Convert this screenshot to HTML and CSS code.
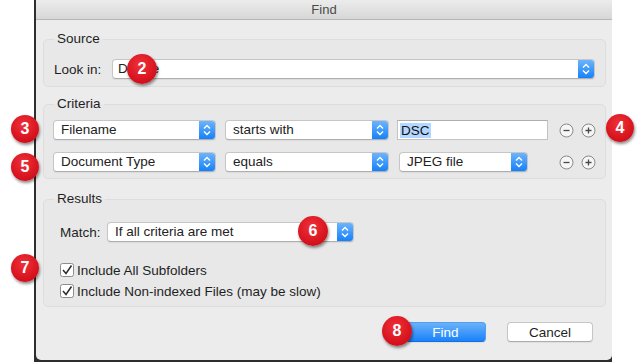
FILE: index.html
```html
<!DOCTYPE html>
<html lang="en">
  <head>
    <meta charset="UTF-8" />
    <meta name="viewport" content="width=device-width, initial-scale=1.0" />
    <title>Find</title>
    <link rel="stylesheet" href="styles.css">
  </head>
  <body>
    <div class="desk">
      <div class="frame">
        <div class="window">
          <div class="titlebar">Find</div>
          <div class="content">
            <fieldset class="group source">
              <legend>Source</legend>
              <div class="row">
                <span class="label">Look in:</span>
                <div class="popup look">
                  <span class="value">Device</span>
                  <span class="stepper"><svg width="16" height="18" viewBox="0 0 16 18"><path d="M5 7.5 8 4.5 11 7.5M5 10.5 8 13.5 11 10.5" /></svg></span>
                </div>
              </div>
            </fieldset>

            <fieldset class="group criteria">
              <legend>Criteria</legend>
              <div class="row">
                <div class="popup field">
                  <span class="value">Filename</span>
                  <span class="stepper"><svg width="16" height="18" viewBox="0 0 16 18"><path d="M5 7.5 8 4.5 11 7.5M5 10.5 8 13.5 11 10.5" /></svg></span>
                </div>
                <div class="popup op">
                  <span class="value">starts with</span>
                  <span class="stepper"><svg width="16" height="18" viewBox="0 0 16 18"><path d="M5 7.5 8 4.5 11 7.5M5 10.5 8 13.5 11 10.5" /></svg></span>
                </div>
                <div class="textfield"><span class="selected">DSC</span></div>
                <div class="pm">
                  <svg width="15" height="15" viewBox="0 0 15 15"><circle cx="7.5" cy="7.5" r="6.5" /><path d="M4.5 7.5H10.5" /></svg>
                  <svg width="15" height="15" viewBox="0 0 15 15"><circle cx="7.5" cy="7.5" r="6.5" /><path d="M4.5 7.5H10.5M7.5 4.5V10.5" /></svg>
                </div>
              </div>
              <div class="row">
                <div class="popup field">
                  <span class="value">Document Type</span>
                  <span class="stepper"><svg width="16" height="18" viewBox="0 0 16 18"><path d="M5 7.5 8 4.5 11 7.5M5 10.5 8 13.5 11 10.5" /></svg></span>
                </div>
                <div class="popup op">
                  <span class="value">equals</span>
                  <span class="stepper"><svg width="16" height="18" viewBox="0 0 16 18"><path d="M5 7.5 8 4.5 11 7.5M5 10.5 8 13.5 11 10.5" /></svg></span>
                </div>
                <div class="popup kind">
                  <span class="value">JPEG file</span>
                  <span class="stepper"><svg width="16" height="18" viewBox="0 0 16 18"><path d="M5 7.5 8 4.5 11 7.5M5 10.5 8 13.5 11 10.5" /></svg></span>
                </div>
                <div class="pm">
                  <svg width="15" height="15" viewBox="0 0 15 15"><circle cx="7.5" cy="7.5" r="6.5" /><path d="M4.5 7.5H10.5" /></svg>
                  <svg width="15" height="15" viewBox="0 0 15 15"><circle cx="7.5" cy="7.5" r="6.5" /><path d="M4.5 7.5H10.5M7.5 4.5V10.5" /></svg>
                </div>
              </div>
            </fieldset>

            <fieldset class="group results">
              <legend>Results</legend>
              <div class="row">
                <span class="label">Match:</span>
                <div class="popup match">
                  <span class="value">If all criteria are met</span>
                  <span class="stepper"><svg width="16" height="18" viewBox="0 0 16 18"><path d="M5 7.5 8 4.5 11 7.5M5 10.5 8 13.5 11 10.5" /></svg></span>
                </div>
              </div>
              <div class="checks">
                <div class="check">
                  <svg width="14" height="14" viewBox="0 0 14 14"><rect x="0.5" y="0.5" width="13" height="13" rx="2" /><path d="M3 7 6 10.5 11.5 2.5" /></svg>
                  <span>Include All Subfolders</span>
                </div>
                <div class="check">
                  <svg width="14" height="14" viewBox="0 0 14 14"><rect x="0.5" y="0.5" width="13" height="13" rx="2" /><path d="M3 7 6 10.5 11.5 2.5" /></svg>
                  <span>Include Non-indexed Files (may be slow)</span>
                </div>
              </div>
            </fieldset>

            <div class="buttons">
              <button class="btn primary">Find</button>
              <button class="btn">Cancel</button>
            </div>
          </div>
        </div>
      </div>

      <span class="badge b2">2</span>
      <span class="badge b3">3</span>
      <span class="badge b4">4</span>
      <span class="badge b5">5</span>
      <span class="badge b6">6</span>
      <span class="badge b7">7</span>
      <span class="badge b8">8</span>
    </div>
  </body>
</html>
```

FILE: styles.css
```css
* {
  box-sizing: border-box;
}
body {
  margin: 0;
  background: #fff;
  font-family: "Liberation Sans", Arial, sans-serif;
  font-size: 13.5px;
  color: #1f1f1f;
}
.desk {
  position: relative;
  width: 644px;
  height: 362px;
  overflow: hidden;
}
.frame {
  margin-left: 34px;
  width: 578px;
  height: 362px;
  padding-left: 2px;
  background: #2e2e2e;
}
.window {
  width: 576px;
  height: 360px;
  background: #ececec;
  border-radius: 0 0 5px 5px;
  overflow: hidden;
}
.titlebar {
  height: 20px;
  line-height: 19px;
  text-align: center;
  font-size: 13px;
  color: #4a4a4a;
  background: linear-gradient(#ececec, #d7d7d7);
  border-bottom: 1px solid #b6b6b6;
}
.content {
  padding: 11px 6px 0 7px;
}

/* group boxes */
.group {
  margin: 0;
  min-width: 0;
  padding: 0 9px;
  border: 1px solid #dddddd;
  border-radius: 5px;
  background: #e8e8e8;
}
.group legend {
  margin-left: 1px;
  padding: 0 3px;
  line-height: 16px;
  color: #1f1f1f;
}
.source {
  padding-top: 12px;
  padding-bottom: 7px;
}
.criteria {
  margin-top: 9px;
  padding-top: 8px;
  padding-bottom: 6px;
}
.results {
  margin-top: 12px;
  padding: 15px 9px 7px 16px;
}
.results legend {
  margin-left: -6px;
}
.row {
  display: flex;
  align-items: center;
  height: 20px;
}
.criteria .row + .row {
  margin-top: 12px;
}
.label {
  width: 59px;
  padding-left: 1px;
}
.results .label {
  width: 47px;
  padding-left: 0;
}

/* pop-up buttons */
.popup {
  display: flex;
  align-items: stretch;
  height: 20px;
  background: #fff;
  border: 1px solid #c6c6c6;
  border-bottom-color: #aeaeae;
  border-radius: 4px;
  box-shadow: 0 1px 1px rgba(0, 0, 0, 0.06);
  overflow: hidden;
}
.popup .value {
  flex: 1;
  line-height: 18px;
  padding-left: 7px;
  color: #222;
  white-space: nowrap;
}
.popup.look .value {
  padding-left: 5px;
}
.stepper {
  width: 16px;
  background: linear-gradient(#6db4fb, #1681fb);
}
.stepper svg {
  display: block;
}
.stepper path {
  fill: none;
  stroke: #fff;
  stroke-width: 1.4;
}
.look {
  width: 483px;
}
.field {
  width: 163px;
}
.op {
  width: 164px;
  margin-left: 9px;
}
.kind {
  width: 129px;
  margin-left: 10px;
}
.match {
  width: 247px;
}

.textfield {
  width: 151px;
  height: 20px;
  margin-left: 8px;
  background: #fff;
  border: 1px solid #c3c3c3;
  border-top-color: #adadad;
  padding: 2px 0 0 2px;
}
.selected {
  display: inline-block;
  line-height: 15px;
  padding: 0 1px;
  background: #b3d7ff;
  color: #111;
}

/* minus / plus */
.pm {
  display: flex;
  gap: 7px;
  margin-left: auto;
}
.pm svg {
  display: block;
}
.pm circle {
  fill: #f6f6f6;
  stroke: #8a8a8a;
  stroke-width: 1;
}
.pm path {
  stroke: #4a4a4a;
  stroke-width: 1.3;
}

/* checkboxes */
.checks {
  margin-top: 20px;
  display: flex;
  flex-direction: column;
  gap: 5px;
}
.check {
  display: flex;
  align-items: center;
  gap: 3px;
  height: 16px;
}
.check svg {
  display: block;
}
.check rect {
  fill: #fff;
  stroke: #8c8c8c;
}
.check path {
  fill: none;
  stroke: #2b2b2b;
  stroke-width: 1.5;
}

/* buttons */
.buttons {
  display: flex;
  justify-content: flex-end;
  gap: 21px;
  margin-top: 15px;
  padding-right: 13px;
}
.btn {
  height: 20px;
  width: 86px;
  padding: 0;
  font-family: inherit;
  font-size: 13.5px;
  color: #1f1f1f;
  background: #fff;
  border: 1px solid #c6c6c6;
  border-bottom-color: #adadad;
  border-radius: 4px;
  box-shadow: 0 1px 1px rgba(0, 0, 0, 0.06);
}
.btn.primary {
  width: 81px;
  color: #fff;
  background: linear-gradient(#6bb2fa, #1a82fb);
  border-color: #4e9ef5;
  border-bottom-color: #1470e0;
}

/* numbered callouts */
.badge {
  position: absolute;
  width: 28px;
  height: 28px;
  border-radius: 50%;
  background: radial-gradient(circle at 45% 35%, #f0313a, #d3101b 70%);
  color: #fff;
  font-weight: bold;
  font-size: 16px;
  line-height: 28px;
  text-align: center;
  box-shadow: 1px 2px 3px rgba(0, 0, 0, 0.45);
}
.b2 {
  left: 127px;
  top: 54px;
  width: 30px;
  height: 30px;
  line-height: 30px;
}
.b3 {
  left: 11px;
  top: 115px;
}
.b4 {
  left: 606px;
  top: 114px;
}
.b5 {
  left: 11px;
  top: 153px;
}
.b6 {
  left: 298px;
  top: 216px;
  width: 30px;
  height: 30px;
  line-height: 30px;
}
.b7 {
  left: 11px;
  top: 254px;
}
.b8 {
  left: 382px;
  top: 316px;
  width: 30px;
  height: 30px;
  line-height: 30px;
}
```
